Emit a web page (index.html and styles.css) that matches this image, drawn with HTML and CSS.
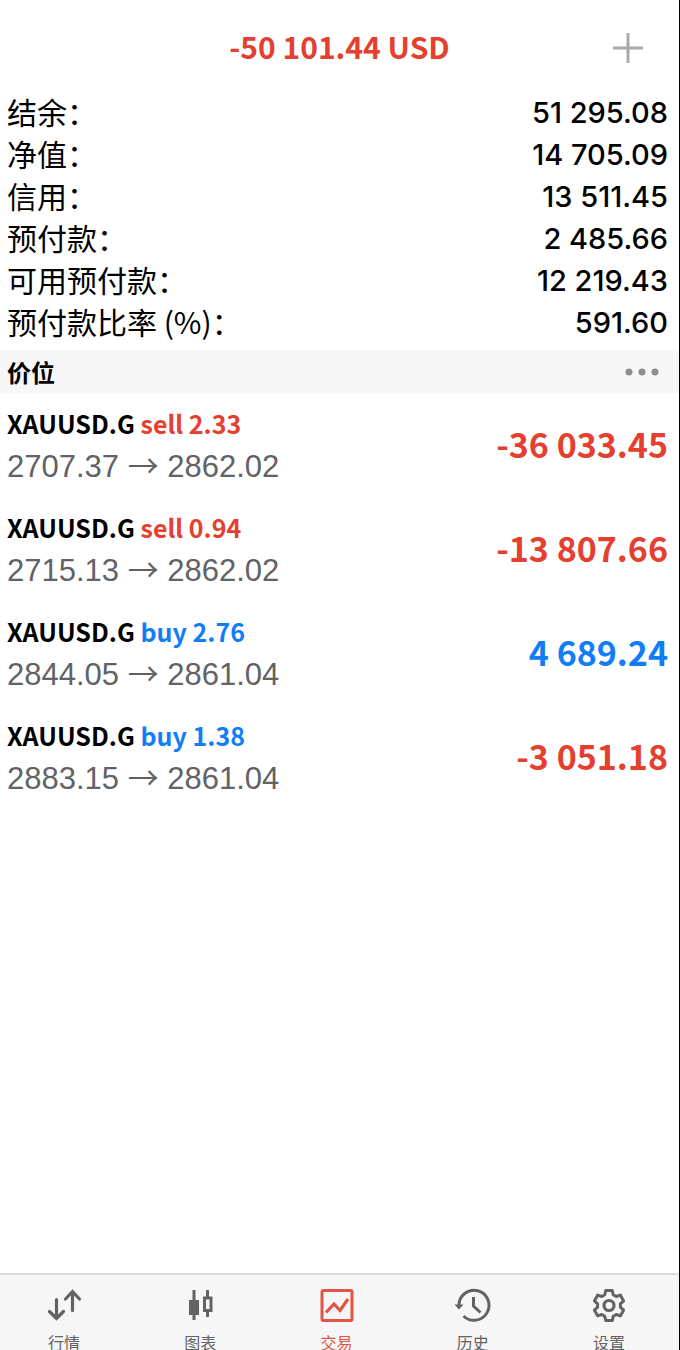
FILE: index.html
```html
<!DOCTYPE html>
<html lang="zh-CN">
<head>
    <meta charset="UTF-8">
    <meta name="viewport" content="width=device-width, initial-scale=1.0">
    <title>交易</title>
    <link rel="stylesheet" href="styles.css">
</head>
<body>
    <div class="app">
        <header class="header">
            <h1 class="profit-total">-50 101.44 USD</h1>
            <button class="add-btn" type="button" aria-label="新订单">
                <svg width="30" height="30" viewBox="0 0 30 30"><path d="M15 0v30M0 15h30"/></svg>
            </button>
        </header>

        <main class="content">
            <dl class="summary">
                <div class="summary-row"><dt>结余：</dt><dd>51 295.08</dd></div>
                <div class="summary-row"><dt>净值：</dt><dd>14 705.09</dd></div>
                <div class="summary-row"><dt>信用：</dt><dd>13 511.45</dd></div>
                <div class="summary-row"><dt>预付款：</dt><dd>2 485.66</dd></div>
                <div class="summary-row"><dt>可用预付款：</dt><dd>12 219.43</dd></div>
                <div class="summary-row"><dt>预付款比率 (%)：</dt><dd>591.60</dd></div>
            </dl>

            <div class="section-bar">
                <h2>价位</h2>
                <button class="more-btn" type="button" aria-label="更多">
                    <svg width="34" height="8" viewBox="0 0 34 8"><circle cx="4" cy="4" r="3.5"/><circle cx="17" cy="4" r="3.5"/><circle cx="30" cy="4" r="3.5"/></svg>
                </button>
            </div>

            <ul class="positions">
                <li class="position">
                    <div>
                        <p class="symbol">XAUUSD.G <span class="sell">sell 2.33</span></p>
                        <p class="prices">2707.37 <span class="arrow">→</span> 2862.02</p>
                    </div>
                    <span class="profit loss">-36 033.45</span>
                </li>
                <li class="position">
                    <div>
                        <p class="symbol">XAUUSD.G <span class="sell">sell 0.94</span></p>
                        <p class="prices">2715.13 <span class="arrow">→</span> 2862.02</p>
                    </div>
                    <span class="profit loss">-13 807.66</span>
                </li>
                <li class="position">
                    <div>
                        <p class="symbol">XAUUSD.G <span class="buy">buy 2.76</span></p>
                        <p class="prices">2844.05 <span class="arrow">→</span> 2861.04</p>
                    </div>
                    <span class="profit gain">4 689.24</span>
                </li>
                <li class="position">
                    <div>
                        <p class="symbol">XAUUSD.G <span class="buy">buy 1.38</span></p>
                        <p class="prices">2883.15 <span class="arrow">→</span> 2861.04</p>
                    </div>
                    <span class="profit loss">-3 051.18</span>
                </li>
            </ul>
        </main>

        <nav class="tabbar">
            <a class="tab" href="#quotes">
                <svg viewBox="0 0 36 36"><path d="M10.500 12.500v19M3.500 24.500l7 7 7-7M26.500 23.500v-19M19.500 12l7-7.500 7 7.500" stroke-width="3.200" stroke-linecap="round"/></svg>
                <span>行情</span>
            </a>
            <a class="tab" href="#chart">
                <svg viewBox="0 0 36 36"><path d="M12 3v30M25.500 3v7M25.500 24v6" stroke-width="3"/><path class="fill" d="M7 13h10v15H7z"/><path d="M22.500 11h6.500v12.500h-6.500z" stroke-width="3"/></svg>
                <span>图表</span>
            </a>
            <a class="tab active" href="#trade">
                <svg viewBox="0 0 36 36"><rect x="3" y="3.500" width="30" height="30" rx="1.500" stroke-width="3"/><path d="M7 25.500l8-8.500 6 6.500L29 12" stroke-width="3.200"/></svg>
                <span>交易</span>
            </a>
            <a class="tab" href="#history">
                <svg viewBox="0 0 36 36"><path d="M4 18.500a15 15 0 1 1 4.500 10.500" stroke-width="3"/><path class="fill" d="M-.500 17.500h9L4 22.500z"/><path d="M18.500 10v9l7 6.500" stroke-width="3"/></svg>
                <span>历史</span>
            </a>
            <a class="tab" href="#settings">
                <svg viewBox="0 0 36 36"><path d="M13.800 7.800L14.700 3.500h6.600l.9 4.300 3 1.700 4.100-1.400 3.300 5.800-3.200 2.900v3.400l3.200 2.900-3.300 5.800-4.100-1.400-3 1.700-.9 4.300h-6.600l-.9-4.300-3-1.700-4.100 1.400-3.300-5.800 3.200-2.900v-3.400l-3.200-2.900 3.300-5.800 4.100 1.400z" stroke-width="3" stroke-linejoin="round"/><circle cx="18" cy="18.500" r="5" stroke-width="3.200"/></svg>
                <span>设置</span>
            </a>
        </nav>
    </div>
</body>
</html>
```
FILE: styles.css
```css
* {
    box-sizing: border-box;
}

body {
    margin: 0;
    background: #fff;
    color: #000;
    font-family: "Noto Sans CJK SC", sans-serif;
}

h1, h2, p, dl, dd, ul {
    margin: 0;
    padding: 0;
}

button {
    padding: 0;
    border: none;
    background: none;
    cursor: pointer;
}

svg {
    display: block;
}

.app {
    display: flex;
    flex-direction: column;
    height: 100vh;
    border-right: 1px solid #000;
    overflow: hidden;
}

.header {
    display: grid;
    grid-template-columns: 1fr auto 1fr;
    align-items: center;
    height: 92px;
    padding: 4px 36px 0 36px;
    flex-shrink: 0;
}

.profit-total {
    grid-column: 2;
    margin-bottom: 4px;
    color: #e5402f;
    font-size: 30px;
    line-height: 48px;
    white-space: nowrap;
}

.add-btn {
    justify-self: end;
}

.add-btn svg {
    stroke: #aaa;
    stroke-width: 3;
}

.content {
    flex: 1;
    min-height: 0;
}

.summary {
    padding: 0 11px 6px 7px;
}

.summary-row {
    display: flex;
    justify-content: space-between;
    font-size: 30px;
}

.summary-row dt {
    line-height: 38px;
}

.summary-row dd {
    font-family: Inter, sans-serif;
    font-size: 29px;
    font-weight: 500;
    line-height: 42px;
}

.section-bar {
    display: flex;
    justify-content: space-between;
    align-items: center;
    height: 43px;
    padding: 0 20px 0 7px;
    background: #f7f7f7;
}

.section-bar h2 {
    font-size: 24px;
    line-height: 43px;
}

.more-btn svg {
    fill: #8e8e8e;
}

.positions {
    list-style: none;
}

.position {
    display: flex;
    justify-content: space-between;
    align-items: center;
    height: 104px;
    padding: 0 11px 0 7px;
}

.symbol {
    font-size: 25px;
    font-weight: bold;
    line-height: 44px;
}

.prices {
    color: #606266;
    font-family: "Liberation Sans", sans-serif;
    font-size: 31px;
    line-height: 44px;
}

.arrow {
    font-family: "Noto Sans CJK SC", sans-serif;
    line-height: 1;
}

.profit {
    margin-bottom: 4px;
    font-size: 34px;
    font-weight: bold;
}

.sell, .loss {
    color: #e5402f;
}

.buy, .gain {
    color: #117df6;
}

.tabbar {
    display: flex;
    justify-content: space-between;
    height: 77px;
    padding: 12px 46px 0 40px;
    border-top: 2px solid #dcdcdc;
    background: #f6f6f6;
    flex-shrink: 0;
}

.tab {
    display: flex;
    flex-direction: column;
    align-items: center;
    width: 48px;
    color: #636363;
    font-size: 16px;
    line-height: 16px;
    text-decoration: none;
}

.tab svg {
    width: 36px;
    height: 36px;
    margin-bottom: 11px;
    fill: none;
    stroke: currentColor;
    overflow: visible;
    flex-shrink: 0;
}

.tab .fill {
    fill: currentColor;
    stroke: none;
}

.tab.active {
    color: #e05545;
}
```
